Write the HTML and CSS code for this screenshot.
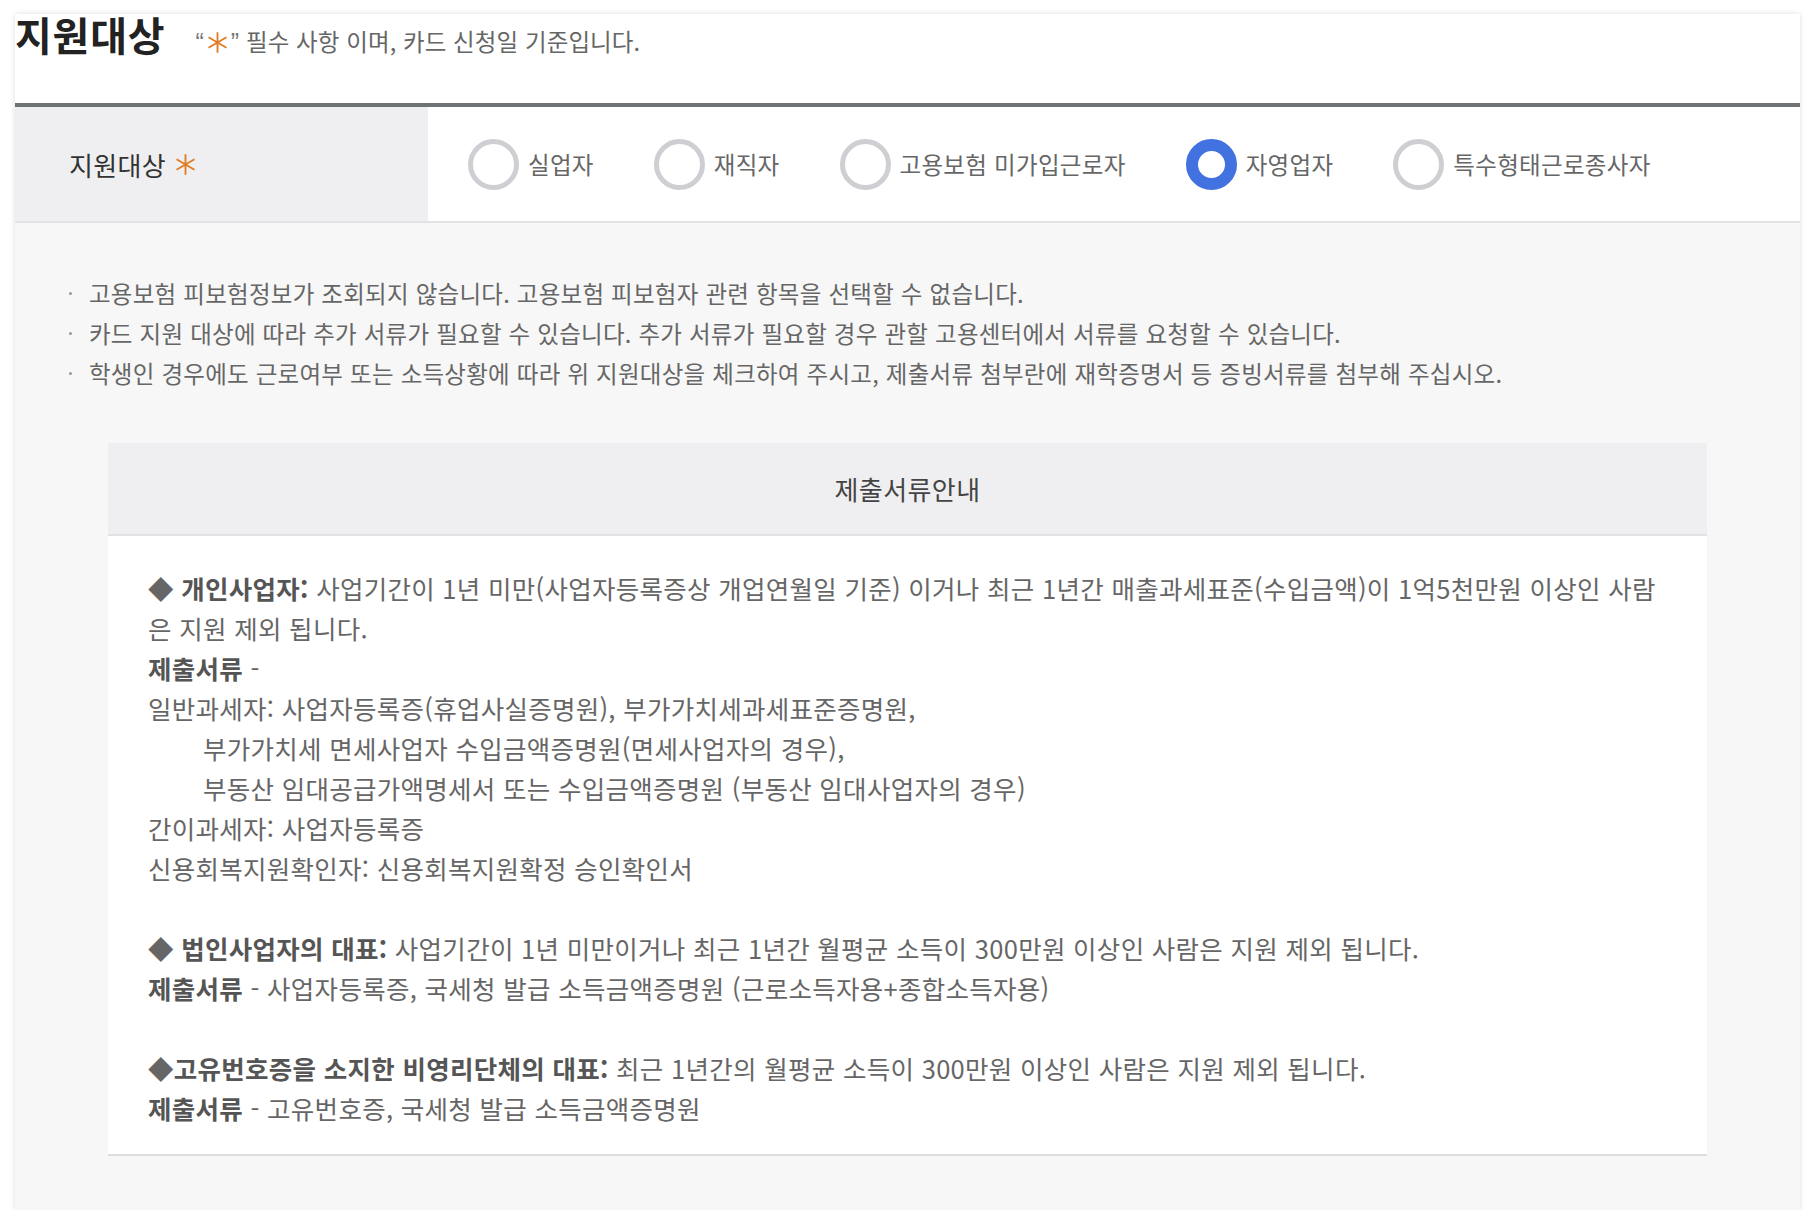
FILE: index.html
```html
<!DOCTYPE html>
<html lang="ko">
<head>
<meta charset="utf-8">
<title>지원대상</title>
<link rel="stylesheet" href="styles.css">
</head>
<body>
<div class="card">
  <div class="head">
    <h2 class="title">지원대상</h2>
    <p class="subtitle"><span class="q">“</span><svg class="ast ast-sm" viewBox="0 0 20 20" aria-hidden="true"><path d="M10 1V19M2.2 5.5L17.8 14.5M2.2 14.5L17.8 5.5"/></svg><span class="q">”</span> 필수 사항 이며, 카드 신청일 기준입니다.</p>
  </div>

  <div class="row">
    <div class="row-label">지원대상 <svg class="ast" viewBox="0 0 20 20" aria-hidden="true"><path d="M10 1V19M2.2 5.5L17.8 14.5M2.2 14.5L17.8 5.5"/></svg></div>
    <div class="options">
      <label class="opt"><span class="radio"></span>실업자</label>
      <label class="opt"><span class="radio"></span>재직자</label>
      <label class="opt"><span class="radio"></span>고용보험 미가입근로자</label>
      <label class="opt"><span class="radio on"></span>자영업자</label>
      <label class="opt"><span class="radio"></span>특수형태근로종사자</label>
    </div>
  </div>

  <div class="body">
    <ul class="notes">
      <li>고용보험 피보험정보가 조회되지 않습니다. 고용보험 피보험자 관련 항목을 선택할 수 없습니다.</li>
      <li>카드 지원 대상에 따라 추가 서류가 필요할 수 있습니다. 추가 서류가 필요할 경우 관할 고용센터에서 서류를 요청할 수 있습니다.</li>
      <li>학생인 경우에도 근로여부 또는 소득상황에 따라 위 지원대상을 체크하여 주시고, 제출서류 첨부란에 재학증명서 등 증빙서류를 첨부해 주십시오.</li>
    </ul>

    <div class="panel">
      <div class="panel-head">제출서류안내</div>
      <div class="panel-body">
        <div class="group">
          <p><span class="dia">◆</span> <b>개인사업자:</b> 사업기간이 1년 미만(사업자등록증상 개업연월일 기준) 이거나 최근 1년간 매출과세표준(수입금액)이 1억5천만원 이상인 사람<br>은 지원 제외 됩니다.</p>
          <p><b>제출서류</b> -</p>
          <p>일반과세자: 사업자등록증(휴업사실증명원), 부가가치세과세표준증명원,</p>
          <p class="ind">부가가치세 면세사업자 수입금액증명원(면세사업자의 경우),</p>
          <p class="ind">부동산 임대공급가액명세서 또는 수입금액증명원 (부동산 임대사업자의 경우)</p>
          <p>간이과세자: 사업자등록증</p>
          <p>신용회복지원확인자: 신용회복지원확정 승인확인서</p>
        </div>
        <div class="group">
          <p><span class="dia">◆</span> <b>법인사업자의 대표:</b> 사업기간이 1년 미만이거나 최근 1년간 월평균 소득이 300만원 이상인 사람은 지원 제외 됩니다.</p>
          <p><b>제출서류</b> - 사업자등록증, 국세청 발급 소득금액증명원 (근로소득자용+종합소득자용)</p>
        </div>
        <div class="group">
          <p><span class="dia">◆</span><b>고유번호증을 소지한 비영리단체의 대표:</b> 최근 1년간의 월평균 소득이 300만원 이상인 사람은 지원 제외 됩니다.</p>
          <p><b>제출서류</b> - 고유번호증, 국세청 발급 소득금액증명원</p>
        </div>
      </div>
    </div>
  </div>
</div>
</body>
</html>
```

FILE: styles.css
```css
* {
  box-sizing: border-box;
  margin: 0;
  padding: 0;
}

html, body {
  background: #ffffff;
}

body {
  font-family: "Noto Sans CJK KR", "Noto Sans", sans-serif;
  color: #666666;
}

.card {
  margin: 14px 16px 0 15px;
  background: #ffffff;
  box-shadow: 0 0 5px rgba(0, 0, 0, 0.14);
}

/* ---------- head ---------- */
.head {
  height: 89px;
  display: flex;
  align-items: baseline;
  gap: 30px;
}

.title {
  font-size: 40px;
  line-height: 40px;
  font-weight: 700;
  letter-spacing: 0.8px;
  color: #222222;
}

.subtitle {
  font-size: 23.5px;
  letter-spacing: 0.1px;
  color: #666666;
}

.q {
  font-family: "Liberation Sans", sans-serif;
  font-size: 25px;
  color: #777777;
}

.ast {
  width: 23px;
  height: 23px;
  fill: none;
  stroke: #e07b22;
  stroke-width: 1.6;
  flex: none;
}

.ast-sm {
  width: 23px;
  height: 23px;
  margin: 0 2px;
  vertical-align: -3px;
}

/* ---------- row ---------- */
.row {
  display: flex;
  height: 120px;
  border-top: 4px solid #6f7375;
  border-bottom: 2px solid #e3e3e5;
}

.row-label {
  width: 413px;
  flex: none;
  background: #efeff1;
  display: flex;
  align-items: center;
  gap: 8px;
  padding-left: 54px;
  font-size: 26px;
  letter-spacing: 0.3px;
  color: #333333;
}

.options {
  flex: 1;
  display: flex;
  align-items: center;
  gap: 60px;
  padding-left: 40px;
}

.opt {
  display: flex;
  align-items: center;
  gap: 9px;
  font-size: 23.5px;
  letter-spacing: 0.3px;
  color: #666666;
}

.radio {
  width: 51px;
  height: 51px;
  flex: none;
  border-radius: 50%;
  border: 5px solid #cfcfd3;
  background: #ffffff;
}

.radio.on {
  border: 12px solid #4272e0;
}

/* ---------- body ---------- */
.body {
  background: #f7f7f7;
  padding: 50px 0 54px;
}

.notes {
  list-style: none;
  padding-left: 54px;
}

.notes li {
  display: flex;
  align-items: center;
  font-size: 23.5px;
  line-height: 40px;
  letter-spacing: 0.25px;
  color: #666666;
}

.notes li::before {
  content: "";
  width: 3px;
  height: 3px;
  flex: none;
  margin-right: 17px;
  border-radius: 50%;
  background: #9a9a9a;
}

.panel {
  margin: 50px 93px 0;
  background: #ffffff;
  border-bottom: 2px solid #dedede;
}

.panel-head {
  height: 93px;
  background: #efeff1;
  border-bottom: 2px solid #e2e2e4;
  display: flex;
  align-items: center;
  justify-content: center;
  font-size: 26px;
  letter-spacing: 0.4px;
  color: #444444;
}

.panel-body {
  padding: 32px 16px 26px 40px;
  font-size: 25.5px;
  line-height: 40px;
  letter-spacing: 0.3px;
  color: #666666;
}

.group + .group {
  margin-top: 40px;
}

.panel-body b {
  font-weight: 700;
  color: #555555;
}

.dia {
  color: #666666;
}

.ind {
  padding-left: 55px;
}
```
